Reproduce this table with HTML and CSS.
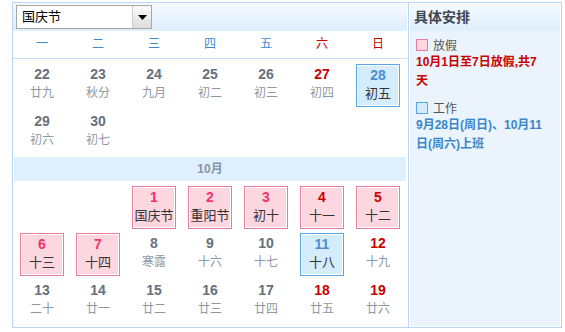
FILE: index.html
```html
<!DOCTYPE html>
<html lang="zh-CN">
<head>
<meta charset="utf-8">
<title>国庆节 日历</title>
<link rel="stylesheet" href="styles.css">
</head>
<body>
<div class="cal-wrap">
  <div class="cal">
    <div class="topbar">
      <div class="select">
        <span class="select-text">国庆节</span>
        <span class="select-btn"><svg width="9" height="5" viewBox="0 0 9 5"><polygon points="0,0 9,0 4.5,5" fill="#000"/></svg></span>
      </div>
    </div>
    <div class="weekdays">
      <span>一</span><span>二</span><span>三</span><span>四</span><span>五</span><span class="we">六</span><span class="we">日</span>
    </div>
    <div class="week">
      <div class="cell"><div class="day"><span class="num">22</span><span class="lunar">廿九</span></div></div>
      <div class="cell"><div class="day"><span class="num">23</span><span class="lunar">秋分</span></div></div>
      <div class="cell"><div class="day"><span class="num">24</span><span class="lunar">九月</span></div></div>
      <div class="cell"><div class="day"><span class="num">25</span><span class="lunar">初二</span></div></div>
      <div class="cell"><div class="day"><span class="num">26</span><span class="lunar">初三</span></div></div>
      <div class="cell"><div class="day"><span class="num red">27</span><span class="lunar">初四</span></div></div>
      <div class="cell"><div class="day work"><span class="num">28</span><span class="lunar">初五</span></div></div>
    </div>
    <div class="week">
      <div class="cell"><div class="day"><span class="num">29</span><span class="lunar">初六</span></div></div>
      <div class="cell"><div class="day"><span class="num">30</span><span class="lunar">初七</span></div></div>
      <div class="cell"></div><div class="cell"></div><div class="cell"></div><div class="cell"></div><div class="cell"></div>
    </div>
    <div class="month-band">10月</div>
    <div class="week">
      <div class="cell"></div><div class="cell"></div>
      <div class="cell"><div class="day holiday"><span class="num">1</span><span class="lunar">国庆节</span></div></div>
      <div class="cell"><div class="day holiday"><span class="num">2</span><span class="lunar">重阳节</span></div></div>
      <div class="cell"><div class="day holiday"><span class="num">3</span><span class="lunar">初十</span></div></div>
      <div class="cell"><div class="day holiday"><span class="num red">4</span><span class="lunar">十一</span></div></div>
      <div class="cell"><div class="day holiday"><span class="num red">5</span><span class="lunar">十二</span></div></div>
    </div>
    <div class="week">
      <div class="cell"><div class="day holiday"><span class="num">6</span><span class="lunar">十三</span></div></div>
      <div class="cell"><div class="day holiday"><span class="num">7</span><span class="lunar">十四</span></div></div>
      <div class="cell"><div class="day"><span class="num">8</span><span class="lunar">寒露</span></div></div>
      <div class="cell"><div class="day"><span class="num">9</span><span class="lunar">十六</span></div></div>
      <div class="cell"><div class="day"><span class="num">10</span><span class="lunar">十七</span></div></div>
      <div class="cell"><div class="day work"><span class="num">11</span><span class="lunar">十八</span></div></div>
      <div class="cell"><div class="day"><span class="num red">12</span><span class="lunar">十九</span></div></div>
    </div>
    <div class="week">
      <div class="cell"><div class="day"><span class="num">13</span><span class="lunar">二十</span></div></div>
      <div class="cell"><div class="day"><span class="num">14</span><span class="lunar">廿一</span></div></div>
      <div class="cell"><div class="day"><span class="num">15</span><span class="lunar">廿二</span></div></div>
      <div class="cell"><div class="day"><span class="num">16</span><span class="lunar">廿三</span></div></div>
      <div class="cell"><div class="day"><span class="num">17</span><span class="lunar">廿四</span></div></div>
      <div class="cell"><div class="day"><span class="num red">18</span><span class="lunar">廿五</span></div></div>
      <div class="cell"><div class="day"><span class="num red">19</span><span class="lunar">廿六</span></div></div>
    </div>
  </div>
  <div class="side">
    <div class="side-inner">
      <div class="side-head">具体安排</div>
      <div class="side-body">
        <div class="legend"><span class="sw sw-holiday"></span>放假</div>
        <div class="note note-red">10月1日至7日放假,共7<br>天</div>
        <div class="legend legend-work"><span class="sw sw-work"></span>工作</div>
        <div class="note note-blue">9月28日(周日)、10月11<br>日(周六)上班</div>
      </div>
    </div>
  </div>
</div>
</body>
</html>
```
FILE: styles.css
```css
html, body {
  margin: 0;
  padding: 0;
  background: #fff;
}
body {
  font-family: "Liberation Sans", "Noto Sans CJK SC", sans-serif;
}
.cal-wrap {
  margin: 2px 0 0 12px;
  width: 550px;
  height: 326px;
  box-sizing: border-box;
  border: 1px solid #b9d7f5;
  display: flex;
  background: #fff;
}
.cal {
  width: 394px;
  display: flex;
  flex-direction: column;
}
.topbar {
  height: 28px;
  box-sizing: border-box;
  padding: 2px 0 0 3px;
  background: linear-gradient(#f6faff, #dcedfc);
}
.select {
  width: 136px;
  height: 24px;
  box-sizing: border-box;
  border: 1px solid #a7a7a7;
  background: #fff;
  display: flex;
}
.select-text {
  flex: 1;
  padding-left: 5px;
  font-size: 13px;
  line-height: 22px;
  color: #000;
}
.select-btn {
  width: 18px;
  border-left: 1px solid #cdcdcd;
  background: linear-gradient(#fbfbfb, #dcdcdc);
  display: flex;
  align-items: center;
  justify-content: center;
}
.weekdays {
  display: grid;
  grid-template-columns: repeat(7, 56px);
  padding: 0 1px;
  height: 27px;
  border-bottom: 1px solid #c6dff6;
  line-height: 27px;
  font-size: 12px;
  text-align: center;
  color: #3a8ad0;
}
.weekdays .we {
  color: #c40000;
}
.week {
  display: grid;
  grid-template-columns: repeat(7, 56px);
  grid-template-rows: 47px;
  height: 47px;
  padding: 0 1px;
}
.cell {
  display: flex;
  justify-content: center;
}
.day {
  margin-top: 5px;
  width: 44px;
  height: 43px;
  box-sizing: border-box;
  border: 1px solid transparent;
  display: flex;
  flex-direction: column;
  align-items: center;
}
.num {
  font-size: 14px;
  font-weight: bold;
  line-height: 18px;
  color: #66717e;
}
.num.red {
  color: #cc0000;
}
.lunar {
  font-size: 12px;
  line-height: 20px;
  color: #8c99a5;
}
.day.work,
.day.holiday {
  padding-top: 1px;
  box-shadow: inset 0 0 0 1px #fff;
}
.day.work {
  border-color: #58a6e4;
  background: #d4ecfc;
}
.day.work .num {
  color: #4a8fd3;
}
.day.holiday {
  border-color: #ea7c9c;
  background: #fdd7e0;
}
.day.holiday .num {
  color: #f0336c;
}
.day.holiday .num.red {
  color: #cc0000;
}
.day.work .lunar,
.day.holiday .lunar {
  color: #333;
  font-size: 13px;
}
.month-band {
  margin: 4px 1px 0;
  height: 24px;
  line-height: 24px;
  background: #e0effd;
  text-align: center;
  font-size: 12px;
  font-weight: bold;
  color: #8796a6;
}
.side {
  width: 153px;
  margin-left: 1px;
  box-sizing: border-box;
  border-left: 1px solid #b9d7f5;
  padding: 1px;
  background: #fff;
}
.side-inner {
  height: 100%;
  background: #ebf3fd;
}
.side-head {
  height: 27px;
  line-height: 27px;
  padding-left: 4px;
  background: linear-gradient(#f6faff, #dcedfc);
  font-size: 14px;
  font-weight: bold;
  color: #3d4756;
}
.side-body {
  padding: 5px 0 0 6px;
}
.legend {
  display: flex;
  align-items: center;
  height: 17px;
  font-size: 12px;
  color: #555;
}
.legend-work {
  margin-top: 8px;
}
.sw {
  width: 12px;
  height: 12px;
  box-sizing: border-box;
  border: 1px solid;
  margin-right: 5px;
}
.sw-holiday {
  border-color: #ea7c9c;
  background: #fdd7e0;
}
.sw-work {
  border-color: #58a6e4;
  background: #d4ecfc;
}
.note {
  font-size: 12px;
  font-weight: bold;
  line-height: 19px;
  white-space: nowrap;
}
.note-red {
  color: #c80000;
}
.note-blue {
  color: #3a86c8;
}
```
